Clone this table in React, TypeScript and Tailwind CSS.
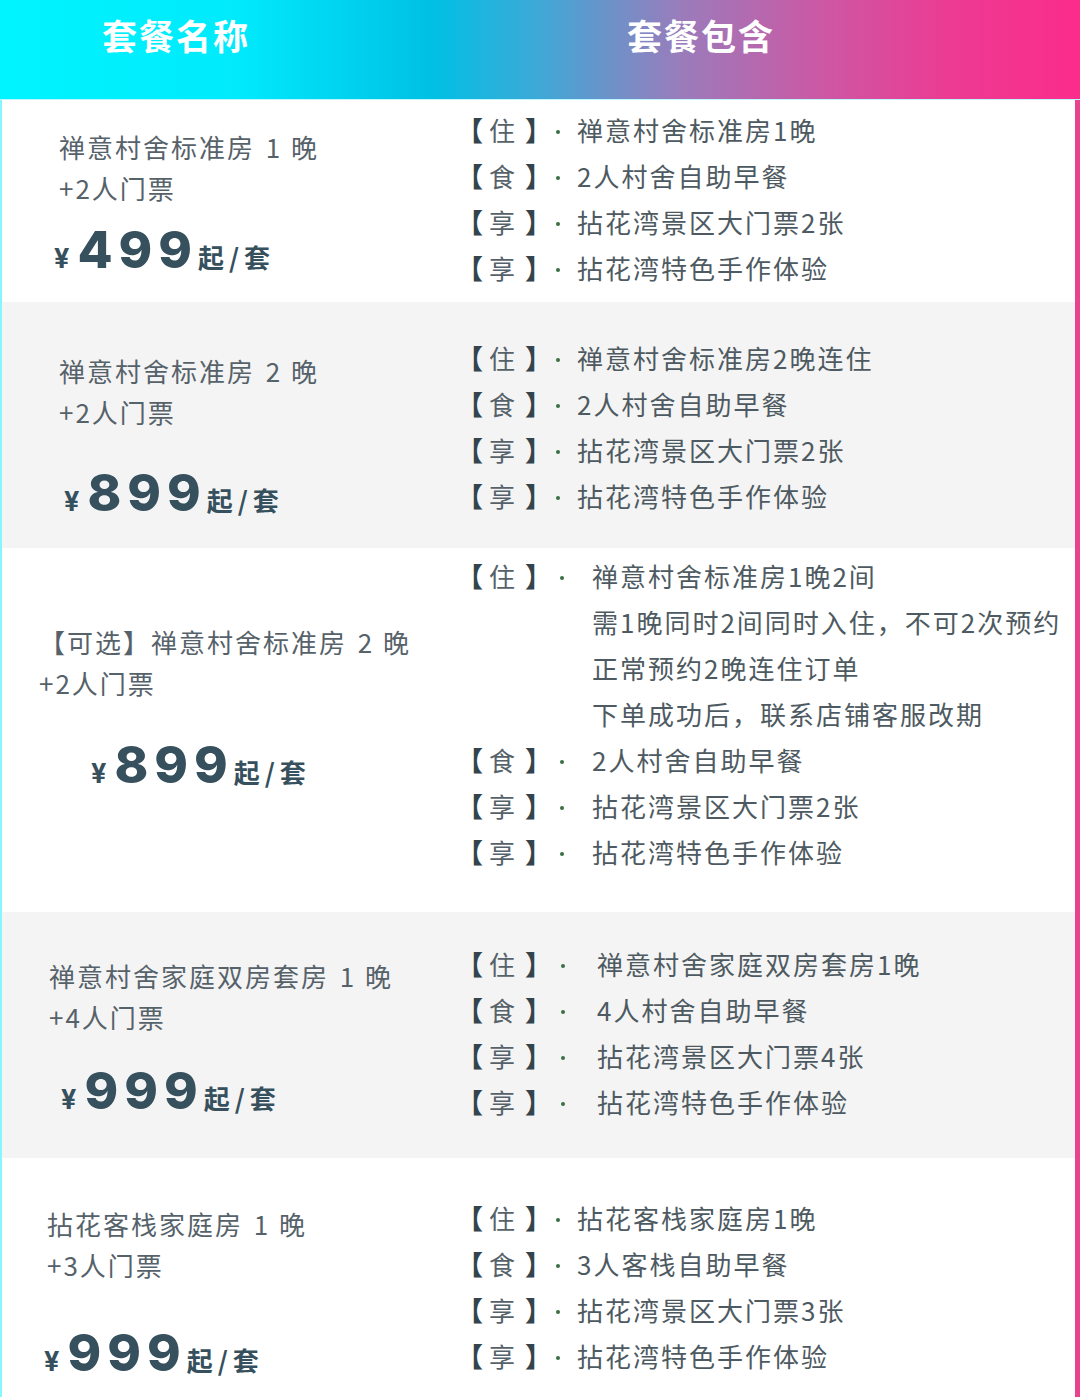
import React from "react";

type Item = { label: string; lines: string[] };
type Row = {
  bg: string;
  h: string;
  nameBox: string;
  name1: React.ReactNode;
  name2: string;
  priceBox: string;
  price: string;
  itemsBox: string;
  dotBox: string;
  items: Item[];
};

const cjk = "font-['Noto_Sans_CJK_SC',sans-serif]";

const Digit = ({ d }: { d: string }) => (
  <span className="inline-block w-[36px] text-center tracking-[0px]">{d}</span>
);

const rows: Row[] = [
  {
    bg: "bg-white",
    h: "h-[202px]",
    nameBox: "pt-[26px] pl-[57px]",
    name1: (
      <>
        禅意村舍标准房<Digit d="1" />晚
      </>
    ),
    name2: "+2人门票",
    priceBox: "mt-[12px] pl-[52px]",
    price: "499",
    itemsBox: "pt-[7px]",
    dotBox: "w-[26px] pl-[5px]",
    items: [
      { label: "住", lines: ["禅意村舍标准房1晚"] },
      { label: "食", lines: ["2人村舍自助早餐"] },
      { label: "享", lines: ["拈花湾景区大门票2张"] },
      { label: "享", lines: ["拈花湾特色手作体验"] },
    ],
  },
  {
    bg: "bg-[#f4f4f4]",
    h: "h-[246px]",
    nameBox: "pt-[48px] pl-[57px]",
    name1: (
      <>
        禅意村舍标准房<Digit d="2" />晚
      </>
    ),
    name2: "+2人门票",
    priceBox: "mt-[31px] pl-[62px]",
    price: "899",
    itemsBox: "pt-[33px]",
    dotBox: "w-[26px] pl-[5px]",
    items: [
      { label: "住", lines: ["禅意村舍标准房2晚连住"] },
      { label: "食", lines: ["2人村舍自助早餐"] },
      { label: "享", lines: ["拈花湾景区大门票2张"] },
      { label: "享", lines: ["拈花湾特色手作体验"] },
    ],
  },
  {
    bg: "bg-white",
    h: "h-[364px]",
    nameBox: "pt-[73px] pl-[37px]",
    name1: (
      <>
        【可选】禅意村舍标准房<Digit d="2" />晚
      </>
    ),
    name2: "+2人门票",
    priceBox: "mt-[32px] pl-[89px]",
    price: "899",
    itemsBox: "pt-[5px]",
    dotBox: "w-[41px] pl-[9px]",
    items: [
      {
        label: "住",
        lines: [
          "禅意村舍标准房1晚2间",
          "需1晚同时2间同时入住，不可2次预约",
          "正常预约2晚连住订单",
          "下单成功后，联系店铺客服改期",
        ],
      },
      { label: "食", lines: ["2人村舍自助早餐"] },
      { label: "享", lines: ["拈花湾景区大门票2张"] },
      { label: "享", lines: ["拈花湾特色手作体验"] },
    ],
  },
  {
    bg: "bg-[#f4f4f4]",
    h: "h-[246px]",
    nameBox: "pt-[43px] pl-[47px]",
    name1: (
      <>
        禅意村舍家庭双房套房<Digit d="1" />晚
      </>
    ),
    name2: "+4人门票",
    priceBox: "mt-[24px] pl-[59px]",
    price: "999",
    itemsBox: "pt-[29px]",
    dotBox: "w-[46px] pl-[10px]",
    items: [
      { label: "住", lines: ["禅意村舍家庭双房套房1晚"] },
      { label: "食", lines: ["4人村舍自助早餐"] },
      { label: "享", lines: ["拈花湾景区大门票4张"] },
      { label: "享", lines: ["拈花湾特色手作体验"] },
    ],
  },
  {
    bg: "bg-white",
    h: "h-[239px]",
    nameBox: "pt-[45px] pl-[45px]",
    name1: (
      <>
        拈花客栈家庭房<Digit d="1" />晚
      </>
    ),
    name2: "+3人门票",
    priceBox: "mt-[38px] pl-[42px]",
    price: "999",
    itemsBox: "pt-[37px]",
    dotBox: "w-[26px] pl-[5px]",
    items: [
      { label: "住", lines: ["拈花客栈家庭房1晚"] },
      { label: "食", lines: ["3人客栈自助早餐"] },
      { label: "享", lines: ["拈花湾景区大门票3张"] },
      { label: "享", lines: ["拈花湾特色手作体验"] },
    ],
  },
];

function ItemRow({ item, dotBox }: { item: Item; dotBox: string }) {
  return (
    <div className="flex">
      <div className="flex h-[46px] items-center">
        <div className={`flex w-[96px] items-center leading-[46px] ${cjk}`}>
          <span className="ml-[1px] w-[25px] text-[27px] font-bold text-[#33444d]">【</span>
          <span className="ml-[8px] w-[26px] text-[26px] text-[#56626a]">{item.label}</span>
          <span className="ml-[10px] w-[25px] text-[27px] font-bold text-[#33444d]">】</span>
        </div>
        <div className={`flex h-[46px] items-center ${dotBox}`}>
          <span className="mt-[3px] h-[4px] w-[4px] rounded-full bg-[#3a6f45]" />
        </div>
      </div>
      <div className="flex flex-col">
        {item.lines.map((l, i) => (
          <div
            key={i}
            className={`h-[46px] whitespace-nowrap text-[26px] leading-[46px] tracking-[2px] text-[#4e5a61] ${cjk}`}
          >
            {l}
          </div>
        ))}
      </div>
    </div>
  );
}

function PackageRow({ row }: { row: Row }) {
  return (
    <div className={`flex ${row.bg} ${row.h}`}>
      <div className="flex w-[448px] shrink-0 flex-col">
        <div
          className={`whitespace-nowrap text-[26px] leading-[41px] tracking-[2px] text-[#56626a] ${cjk} ${row.nameBox}`}
        >
          <div>{row.name1}</div>
          <div>{row.name2}</div>
        </div>
        <div className={`flex items-baseline text-[#36505d] ${row.priceBox}`}>
          <span className="font-['Inter',sans-serif] text-[27px] font-bold leading-none">¥</span>
          <span className="ml-[8px] font-['Inter',sans-serif] text-[51px] font-extrabold leading-[60px] tracking-[6px]">
            {row.price}
          </span>
          <span className={`text-[26px] font-bold leading-none tracking-[5px] ${cjk}`}>起/套</span>
        </div>
      </div>
      <div className={`flex flex-col pl-[5px] ${row.itemsBox}`}>
        {row.items.map((it, i) => (
          <ItemRow key={i} item={it} dotBox={row.dotBox} />
        ))}
      </div>
    </div>
  );
}

export default function App() {
  return (
    <div className="flex h-[1397px] w-[1080px] flex-col overflow-hidden bg-white">
      <div className="flex h-[100px] shrink-0 border-b border-b-[#bdf6ff] bg-[linear-gradient(90deg,#00f4ff_0%,#00eafc_22%,#00c0e4_40%,#3fa8d7_50%,#9a7cbb_63%,#cc58a4_76%,#ec3b92_88%,#fc2c8b_100%)]">
        <div
          className={`w-[627px] shrink-0 pl-[102px] pt-[13px] text-[35px] font-bold leading-[44px] tracking-[2px] text-white ${cjk}`}
        >
          套餐名称
        </div>
        <div className={`pt-[13px] text-[35px] font-bold leading-[44px] tracking-[2px] text-white ${cjk}`}>
          套餐包含
        </div>
      </div>
      <div className="flex flex-1 flex-col border-l-2 border-r-[5px] border-l-[#86f6ff] border-r-[#e9438e]">
        {rows.map((r, i) => (
          <PackageRow key={i} row={r} />
        ))}
      </div>
    </div>
  );
}
